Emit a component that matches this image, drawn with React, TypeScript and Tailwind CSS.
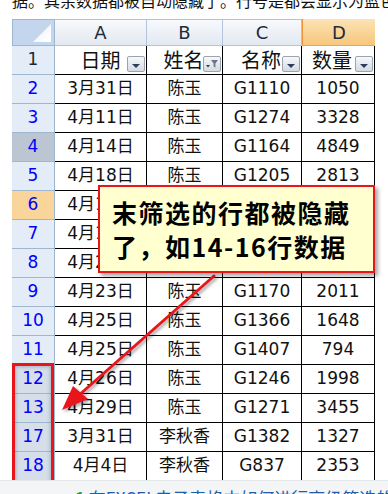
import React from "react";

const rows = [
  { n: "2", date: "3月31日", name: "陈玉", code: "G1110", qty: "1050" },
  { n: "3", date: "4月11日", name: "陈玉", code: "G1274", qty: "3328" },
  { n: "4", date: "4月14日", name: "陈玉", code: "G1164", qty: "4849", bg: "bg-[#bcc6d2]" },
  { n: "5", date: "4月18日", name: "陈玉", code: "G1205", qty: "2813" },
  { n: "6", date: "4月19日", name: "陈玉", code: "G1288", qty: "1956", bg: "bg-[#fad59b]" },
  { n: "7", date: "4月19日", name: "陈玉", code: "G1333", qty: "2519" },
  { n: "8", date: "4月21日", name: "陈玉", code: "G1421", qty: "3101" },
  { n: "9", date: "4月23日", name: "陈玉", code: "G1170", qty: "2011" },
  { n: "10", date: "4月25日", name: "陈玉", code: "G1366", qty: "1648" },
  { n: "11", date: "4月25日", name: "陈玉", code: "G1407", qty: "794" },
  { n: "12", date: "4月26日", name: "陈玉", code: "G1246", qty: "1998", bg: "bg-[#d6dee9]" },
  { n: "13", date: "4月29日", name: "陈玉", code: "G1271", qty: "3455", bg: "bg-[#d6dee9]" },
  { n: "17", date: "3月31日", name: "李秋香", code: "G1382", qty: "1327", bg: "bg-[#d6dee9]" },
  { n: "18", date: "4月4日", name: "李秋香", code: "G837", qty: "2353", bg: "bg-[#d6dee9]" },
];

const DropBtn = ({ filtered }: { filtered?: boolean }) => (
  <span className="absolute right-[1px] top-[10px] w-[18px] h-[16px] border border-[#9aa3b0] rounded-[2px] bg-gradient-to-b from-[#f6f8fa] to-[#d5dbe3] flex items-center justify-center">
    {filtered ? (
      <svg width="14" height="12" viewBox="0 0 14 12">
        <path d="M6 2h7l-2.6 3.4v4.2l-1.8-1.2V5.4z" fill="#6b7686" />
        <path d="M1 7h4l-2 2.5z" fill="#2e3c5c" />
      </svg>
    ) : (
      <span className="mt-[3px] w-0 h-0 border-l-[4px] border-r-[4px] border-t-[4px] border-l-transparent border-r-transparent border-t-[#2e3c5c]" />
    )}
  </span>
);

const cellW = ["w-[92px]", "w-[76px]", "w-[79px]", "w-[73px]"];

export default function App() {
  return (
    <div className="relative w-[388px] h-[494px] overflow-hidden bg-white font-['DejaVu_Sans','Noto_Sans_CJK_SC',sans-serif] text-[#111]">
      {/* clipped caption above the sheet */}
      <div className="h-[19px] overflow-hidden">
        <p className="-mt-[9px] ml-[12px] text-[16px] leading-[18px] whitespace-nowrap font-['Noto_Sans_CJK_SC',sans-serif] text-[#111]">
          据。其余数据都被自动隐藏了。行号是都会显示为蓝色，如要取消
        </p>
      </div>

      {/* column headers */}
      <div className="flex h-[27px] ml-[12px]">
        <div className="w-[43px] border border-[#9eb6ce] bg-[#c3d6ee] relative">
          <svg className="absolute right-[3px] bottom-[3px]" width="18" height="18" viewBox="0 0 18 18">
            <defs>
              <linearGradient id="tri" x1="0" y1="0" x2="1" y2="1">
                <stop offset="0" stopColor="#eef3fa" />
                <stop offset="1" stopColor="#ffffff" />
              </linearGradient>
            </defs>
            <path d="M18 0V18H0z" fill="url(#tri)" />
          </svg>
        </div>
        {["A", "B", "C"].map((c, i) => (
          <div
            key={c}
            className={`${cellW[i]} border-r border-b border-t border-[#b1c5dd] bg-gradient-to-b from-[#f7f9fc] to-[#e3e9f1] flex items-center justify-center text-[18px] text-[#1d2b3a]`}
          >
            {c}
          </div>
        ))}
        <div className="w-[73px] border-l border-l-[#f29436] border-b border-b-[#f2a54a] bg-gradient-to-b from-[#fbe3b5] to-[#f7c77b] flex items-center justify-center text-[18px] text-[#1d2b3a]">
          D
        </div>
      </div>

      {/* header row 1 */}
      <div className="flex h-[29px] ml-[12px]">
        <div className="w-[43px] border-r border-b border-[#9eb6ce] bg-[#e4ecf7] flex items-center justify-center text-[17px] text-[#1c2a30]">
          1
        </div>
        {["日期", "姓名", "名称", "数量"].map((t, i) => (
          <div
            key={t}
            className={`${cellW[i]} relative border-r border-b border-black flex items-center justify-center text-[20px] font-['Noto_Sans_CJK_SC',sans-serif]`}
          >
            <span className={i === 3 ? "mr-[12px]" : i === 0 ? "" : "mr-[2px]"}>{t}</span>
            <DropBtn filtered={i === 1} />
          </div>
        ))}
      </div>

      {rows.map((r) => (
        <div key={r.n} className="flex h-[29px] ml-[12px]">
          <div
            className={`w-[43px] border-r border-b border-[#9eb6ce] ${r.bg ?? "bg-[#e4ecf7]"} flex items-center justify-center text-[17px] text-[#0000ff]`}
          >
            {r.n}
          </div>
          {[r.date, r.name, r.code, r.qty].map((v, i) => (
            <div
              key={i}
              className={`${cellW[i]} border-r border-b border-black flex items-center justify-center text-[17px]`}
            >
              {v}
            </div>
          ))}
        </div>
      ))}

      {/* footer related link */}
      <div className="absolute left-0 right-0 top-[480px] h-[14px] bg-[#f3f5f6] border-t border-[#e2e6e8] z-20 overflow-hidden">
        <p className="ml-[75px] mt-[7px] text-[17px] leading-[20px] whitespace-nowrap font-['Noto_Sans_CJK_SC',sans-serif] text-[#1f5ea8]">
          <span className="text-[#2c9c3e] font-bold">1</span> 在EXCEL电子表格中如何进行高级筛选的操作
        </p>
      </div>

      {/* red highlight around row numbers 12-18 */}
      <div className="absolute left-[12px] top-[363px] w-[42px] h-[125px] border-[3px] border-[#e8151b] shadow-[inset_0_0_4px_rgba(60,70,90,0.45)] z-10" />

      {/* arrow */}
      <svg className="absolute left-0 top-0 z-10 pointer-events-none" width="388" height="494">
        <defs>
          <filter id="sh" x="-20%" y="-20%" width="140%" height="140%">
            <feDropShadow dx="2" dy="2" stdDeviation="1.5" floodColor="#000" floodOpacity="0.35" />
          </filter>
        </defs>
        <g filter="url(#sh)">
          <line x1="214" y1="276" x2="78" y2="396" stroke="#e8191c" strokeWidth="3" strokeLinecap="round" />
          <path d="M62 410 L73 386 L88 399 Z" fill="#e8191c" />
        </g>
      </svg>

      {/* callout */}
      <div className="absolute left-[98px] top-[185px] w-[277px] h-[88px] border-2 border-[#e8151b] bg-[#ffffcf] shadow-[3px_3px_4px_rgba(0,0,0,0.35)] z-10 pl-[12px] pt-[8px]">
        <p className="text-[25px] leading-[34px] font-bold tracking-[1.5px] font-['Noto_Sans_CJK_SC',sans-serif] text-black whitespace-nowrap">
          末筛选的行都被隐藏
          <br />
          了，如14-16行数据
        </p>
      </div>
    </div>
  );
}
